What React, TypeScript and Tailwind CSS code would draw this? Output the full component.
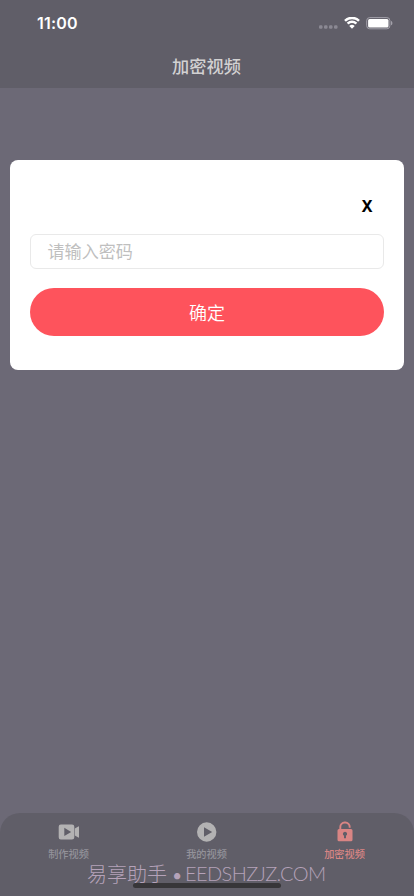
import type { ReactNode } from "react";

function StatusBar() {
  return (
    <div className="flex h-[44px] items-center justify-between pl-[37px] pr-[21px] pt-[2px]">
      <span className="font-['Inter','Liberation_Sans',sans-serif] text-[16px] font-semibold leading-[20px] tracking-[0.2px] text-white">
        11:00
      </span>
      <div className="flex items-center">
        <svg className="mt-[8px]" width="19" height="5" viewBox="0 0 19 5" fill="#8b8993">
          <rect x="0" y="0.3" width="3.5" height="3.5" rx="1.2" />
          <rect x="5" y="0.3" width="3.5" height="3.5" rx="1.2" />
          <rect x="10" y="0.3" width="3.5" height="3.5" rx="1.2" />
          <rect x="15" y="0.3" width="3.5" height="3.5" rx="1.2" />
        </svg>
        <svg className="ml-[6px]" width="16" height="12" viewBox="0 0 16 12" fill="#fff">
          <path d="M8 2.2c2.2 0 4.300.85 5.900 2.350.12.1.3.1.43 0l1.300-1.350a.33.33 0 0 0 0-.47 11 11 0 0 0-15.260 0 .33.33 0 0 0 0 .47l1.300 1.350c.13.1.31.1.43 0A8.600 8.600 0 0 1 8 2.200Z" />
          <path d="M8 6.100c1.200 0 2.350.45 3.250 1.250.12.12.32.12.44 0l1.320-1.330a.33.33 0 0 0 0-.48 7.350 7.350 0 0 0-10.020 0 .33.33 0 0 0 0 .48l1.320 1.330c.12.12.32.12.44 0C5.650 6.550 6.800 6.100 8 6.100Z" />
          <path d="M10.500 8.800a.32.32 0 0 1 0 .48l-2.270 2.300a.33.33 0 0 1-.46 0l-2.270-2.300a.32.32 0 0 1 0-.48 3.800 3.800 0 0 1 5 0Z" />
        </svg>
        <svg className="ml-[6px]" width="27" height="13" viewBox="0 0 27 13">
          <rect x="0.700" y="0.600" width="23.200" height="11.200" rx="3" fill="none" stroke="#a3a1aa" />
          <rect x="2.100" y="2" width="20.400" height="8.400" rx="1.500" fill="#fff" />
          <path d="M25 4.100c1 .4 1.400 1.200 1.400 2.100S26 7.900 25 8.300Z" fill="#a3a1aa" />
        </svg>
      </div>
    </div>
  );
}

function Tab({ label, active, children }: { label: string; active?: boolean; children: ReactNode }) {
  return (
    <div className={`flex flex-1 flex-col items-center ${active ? "text-[#d98584]" : "text-[#b3b2b3]"}`}>
      <div className="flex h-[35px] items-center justify-center pt-[2px]">{children}</div>
      <span
        className={`mr-[1px] text-[10.2px] font-medium leading-[12px] ${active ? "text-[#d98584]" : "text-[#93929a]"}`}
      >
        {label}
      </span>
    </div>
  );
}

export default function App() {
  return (
    <div className="relative flex h-[896px] w-[414px] flex-col overflow-hidden bg-[#6c6976] font-['Noto_Sans_CJK_SC',sans-serif]">
      <header className="h-[88px] bg-[#605e68]">
        <StatusBar />
        <h1 className="flex h-[44px] items-center justify-center pr-[1px] text-[17.2px] font-medium leading-[24px] text-[#d2d1d2]">
          加密视频
        </h1>
      </header>

      <main className="flex-1 px-[10.4px] pt-[72.4px]">
        <section className="flex h-[210px] flex-col rounded-[8px] bg-white px-[19.6px]">
          <button className="mr-[11.5px] mt-[36px] h-[20px] self-end font-['Noto_Sans',sans-serif] text-[16px] font-bold leading-[20px] text-black">
            X
          </button>
          <div className="mt-[17.5px] flex h-[35px] shrink-0 items-center rounded-[6px] border border-[#e9e9e9] pl-[16.5px] text-[17.1px] leading-[24px] text-[#bfbfbf]">
            请输入密码
          </div>
          <button className="mt-[19.500px] h-[48px] shrink-0 rounded-full bg-[#fe535c] text-[18px] font-[350] leading-[47px] text-white">
            确定
          </button>
        </section>
      </main>

      <nav className="flex h-[83px] rounded-t-[20px] bg-[#605e68]">
        <Tab label="制作视频">
          <svg width="22" height="16" viewBox="0 0 22 16" fill="currentColor">
            <path
              fillRule="evenodd"
              d="M3.2.5h10.8a2.300 2.300 0 0 1 2.300 2.300v10.400a2.300 2.300 0 0 1-2.300 2.300H3.200A2.300 2.300 0 0 1 .7 13.200V2.800A2.300 2.300 0 0 1 3.200.5ZM6.300 3.800v8.300l6.900-4.150Z"
            />
            <path d="M16.800 4.600 20.300 2.500q.7-.4.7.4v10.200q0 .8-.7.4L16.800 11.400Z" />
          </svg>
        </Tab>
        <Tab label="我的视频">
          <svg width="20" height="20" viewBox="0 0 20 20" fill="currentColor">
            <path
              fillRule="evenodd"
              d="M9.700.3a9.700 9.700 0 1 1 0 19.400A9.700 9.700 0 0 1 9.700.3ZM7 5.200v9.600l8.200-4.800Z"
            />
          </svg>
        </Tab>
        <Tab label="加密视频" active>
          <svg className="mr-[1px]" width="16" height="21" viewBox="0 0 16 21" fill="currentColor">
            <path
              d="M3.300 9V5.900A4.300 4.300 0 0 1 7.600 1.500h.8a4.300 4.300 0 0 1 4.300 4.400v.9"
              fill="none"
              stroke="currentColor"
              strokeWidth="1.900"
            />
            <path
              fillRule="evenodd"
              d="M2 8h12a1.500 1.500 0 0 1 1.500 1.500v9.300a1.500 1.500 0 0 1-1.500 1.500H2a1.500 1.500 0 0 1-1.500-1.500V9.500A1.500 1.500 0 0 1 2 8Zm6 2.700a2.100 2.100 0 0 0-1 3.950v2.600h2v-2.600a2.100 2.100 0 0 0-1-3.950Z"
            />
          </svg>
        </Tab>
      </nav>

      <div className="absolute left-[87px] top-[860px] flex items-baseline whitespace-pre text-[20px] leading-[28px] text-[#b5a2b9]">
        <span className="w-[98px] font-light">
          易享助手<span className="ml-[4.5px] font-['Inter',sans-serif] font-normal">•</span>
        </span>
        <span className="relative -top-[1px] font-['Lato',sans-serif] font-light tracking-[-0.6px]">EEDSHZJZ.COM</span>
      </div>
      <div className="absolute bottom-[8px] left-[133px] h-[5px] w-[148px] rounded-full bg-[#373639]" />
    </div>
  );
}
